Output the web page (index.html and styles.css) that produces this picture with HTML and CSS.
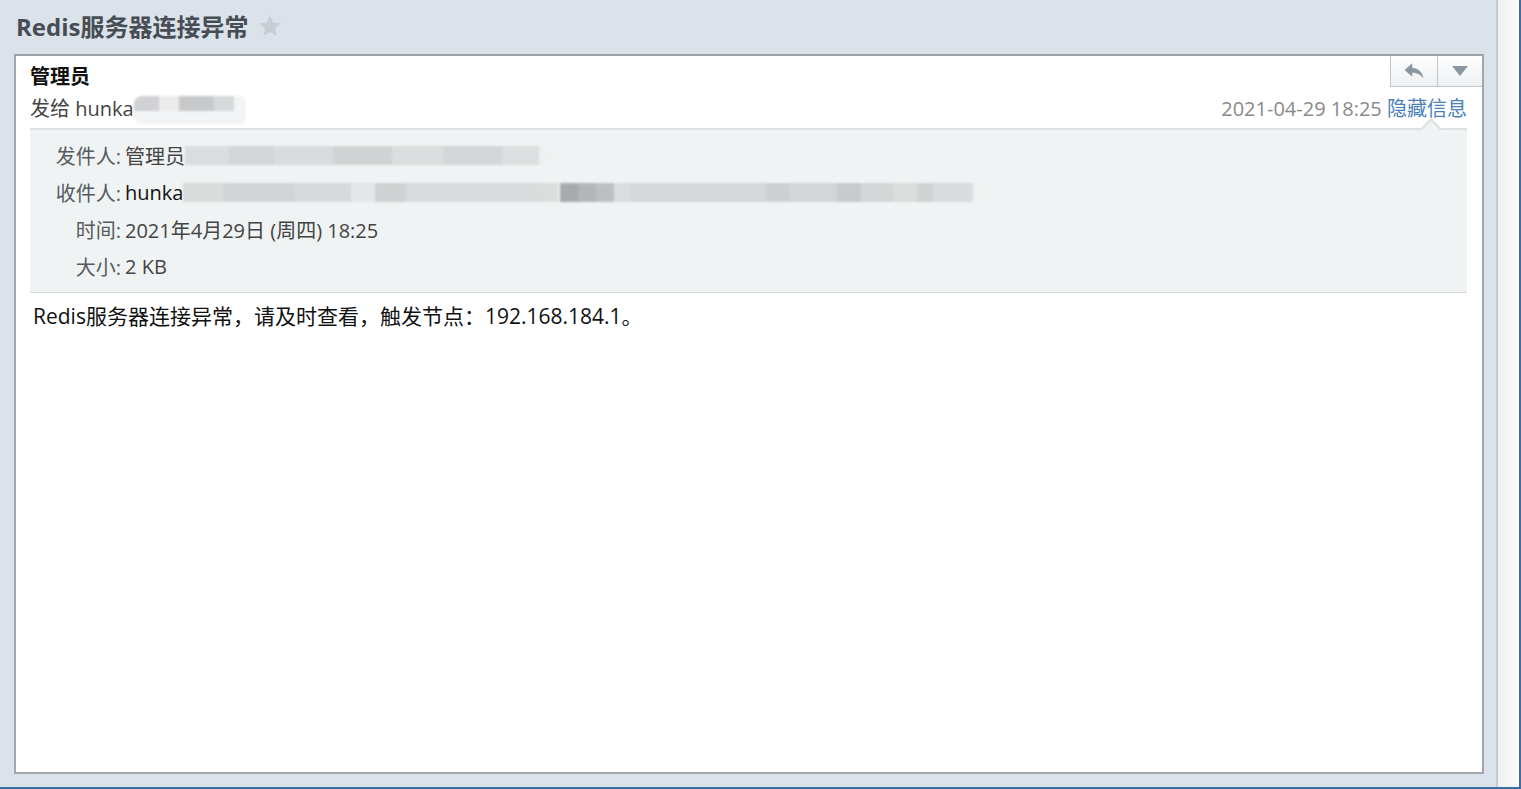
FILE: index.html
```html
<!DOCTYPE html>
<html lang="zh-CN">
<head>
<meta charset="utf-8">
<title>Redis服务器连接异常</title>
<link rel="stylesheet" href="styles.css">
</head>
<body>
<div class="frame">
  <div class="main">
    <div class="subject">
      <h1 class="subject-title">Redis服务器连接异常</h1>
      <svg class="star" viewBox="0 0 24 24" width="24" height="24"><path d="M12 1.5l3.1 7.1 7.7.7-5.8 5.1 1.7 7.6L12 18l-6.7 4 1.7-7.6-5.8-5.1 7.7-.7z" fill="#c8cdd3"/></svg>
    </div>
    <div class="card">
      <div class="actions">
        <button class="act act-reply" type="button" aria-label="回复">
          <svg viewBox="0 0 24 20" width="22" height="18"><path d="M10 1.5 L1.5 9 L10 16.5 V12 C15 12 19 13.5 22.5 18.5 C21.5 11 17 7 10 6.3 Z" fill="#8a96a2"/></svg>
        </button>
        <button class="act act-more" type="button" aria-label="更多">
          <svg viewBox="0 0 16 10" width="16" height="10"><path d="M0 0 H16 L8 10 Z" fill="#8a96a2"/></svg>
        </button>
      </div>
      <div class="head">
        <div class="from-name">管理员</div>
        <div class="head-row">
          <div class="to-line">发给 hunka<span class="blur blur-to"><span class="b b1"></span><span class="b b2"></span><span class="b b3"></span><span class="b b4"></span><span class="b b5"></span></span></div>
          <div class="meta"><span class="date">2021-04-29 18:25</span> <a class="toggle" href="#">隐藏信息</a></div>
        </div>
      </div>
      <div class="details">
        <div class="notch"></div>
        <div class="drow"><span class="dlabel">发件人:</span><span class="dval">管理员<span class="blur blur-line blur-from"></span></span></div>
        <div class="drow"><span class="dlabel">收件人:</span><span class="dval strong">hunka<span class="blur blur-line blur-rcpt"></span></span></div>
        <div class="drow"><span class="dlabel">时间:</span><span class="dval">2021年4月29日 (周四) 18:25</span></div>
        <div class="drow"><span class="dlabel">大小:</span><span class="dval">2 KB</span></div>
      </div>
      <div class="body-text">Redis服务器连接异常，请及时查看，触发节点：192.168.184.1。</div>
    </div>
  </div>
  <div class="side"></div>
</div>
</body>
</html>
```
FILE: styles.css
```css
* { box-sizing: border-box; }
html, body { margin: 0; padding: 0; }
body {
  font-family: "Open Sans", "Noto Sans CJK SC", sans-serif;
  background: #dbe2e9;
  overflow: hidden;
}
.frame {
  height: 789px;
  display: flex;
  border-right: 2px solid #3b6ea6;
  border-bottom: 2px solid #3b6ea6;
}
.main {
  flex: 1;
  display: flex;
  flex-direction: column;
  padding: 0 12px 13px 14px;
  min-width: 0;
}
.side {
  width: 23px;
  border-left: 2px solid #c6cbcf;
  background: linear-gradient(90deg, #eef1f1, #fbfbfb);
}
.subject {
  height: 54px;
  display: flex;
  align-items: center;
  gap: 10px;
  padding-left: 2px;
}
.subject-title {
  margin: 0;
  font-size: 24px;
  font-weight: 700;
  line-height: 30px;
  color: #474d55;
}
.star { display: block; margin-top: -2px; }
.card {
  flex: 1;
  position: relative;
  background: #fff;
  border: 2px solid #a3a7ab;
  border-top-color: #9ea3a7;
}
.actions {
  position: absolute;
  top: 0;
  right: 0;
  display: flex;
  height: 31px;
  border-left: 1px solid #c3c7cb;
  border-bottom: 1px solid #c3c7cb;
}
.act {
  margin: 0;
  padding: 0;
  border: 0;
  height: 30px;
  display: flex;
  align-items: center;
  justify-content: center;
  background: linear-gradient(#ffffff, #eef0f2);
}
.act-reply { width: 47px; border-right: 1px solid #c3c7cb; }
.act-more { width: 44px; }
.act svg { display: block; }
.head { padding: 8px 15px 7px 14px; }
.from-name {
  font-family: "Noto Sans CJK SC", sans-serif;
  font-size: 20px;
  font-weight: 700;
  line-height: 24px;
  color: #111;
}
.head-row {
  margin-top: 9px;
  display: flex;
  justify-content: space-between;
  align-items: center;
  height: 24px;
  font-size: 20px;
  line-height: 24px;
}
.to-line { color: #444; display: flex; align-items: center; }
.meta { color: #8a8a8a; }
.toggle { color: #4a7fba; text-decoration: none; }
.blur {
  display: inline-flex;
  filter: blur(1.2px);
}
.blur-to {
  width: 112px;
  height: 28px;
  margin-left: 0;
  margin-top: 2px;
  border-radius: 8px;
  overflow: hidden;
  background: #f2f3f4;
}
.blur-to .b { height: 15px; }
.b1 { width: 25px; background: #cfd1d3; }
.b2 { width: 20px; background: #ebebec; }
.b3 { width: 35px; background: #c8c9cb; }
.b4 { width: 20px; background: #d8d9da; }
.b5 { width: 12px; background: #f3f4f6; }
.details {
  position: relative;
  margin: 0 15px 0 14px;
  padding: 7px 0 7px;
  background: #f0f3f3;
  border-top: 2px solid #dde1e1;
  border-bottom: 1px solid #d6dada;
  font-size: 20px;
}
.notch {
  position: absolute;
  top: -9px;
  right: 29px;
  width: 14px;
  height: 14px;
  background: #f0f3f3;
  border-left: 2px solid #dde1e1;
  border-top: 2px solid #dde1e1;
  transform: rotate(45deg);
}
.drow {
  display: flex;
  align-items: center;
  height: 37px;
}
.dlabel {
  width: 91px;
  text-align: right;
  color: #555a60;
  flex: none;
}
.dval {
  margin-left: 4px;
  color: #444;
  display: flex;
  align-items: center;
}
.dval.strong { color: #111; }
.blur-line {
  height: 19px;
  margin-left: 0;
  border-radius: 0 9px 9px 0;
}
.blur-from {
  width: 369px;
  background: linear-gradient(90deg, #dadddd 0 12%, #d3d6d6 12% 24%, #d9dcdc 24% 40%, #d1d4d4 40% 56%, #dbdede 56% 70%, #d4d7d7 70% 86%, #dcdfdf 86% 96%, #eef1f1 96%);
}
.blur-rcpt {
  width: 798px;
  background: linear-gradient(90deg, #dadcdc 0 5%, #d2d5d5 5% 14%, #d7dada 14% 21%, #e4e7e7 21% 24%, #cfd2d2 24% 28%, #d9dcdc 28% 45%, #dcdede 45% 47%, #eef1f1 47% 47.2%, #a8aaac 47.2% 49.5%, #b3b6b7 49.5% 51.7%, #bcc0c1 51.7% 54%, #dadede 54% 56%, #d5d8d8 56% 73%, #cdd0d0 73% 76%, #d3d6d6 76% 82%, #c8cbcd 82% 85%, #d4d7d7 85% 89%, #dbdddd 89% 92%, #d0d3d3 92% 94%, #d9dcdc 94% 99%, #eef1f1 99%);
}
.body-text {
  padding: 8px 17px;
  font-size: 21px;
  line-height: 30px;
  color: #111;
}
```
